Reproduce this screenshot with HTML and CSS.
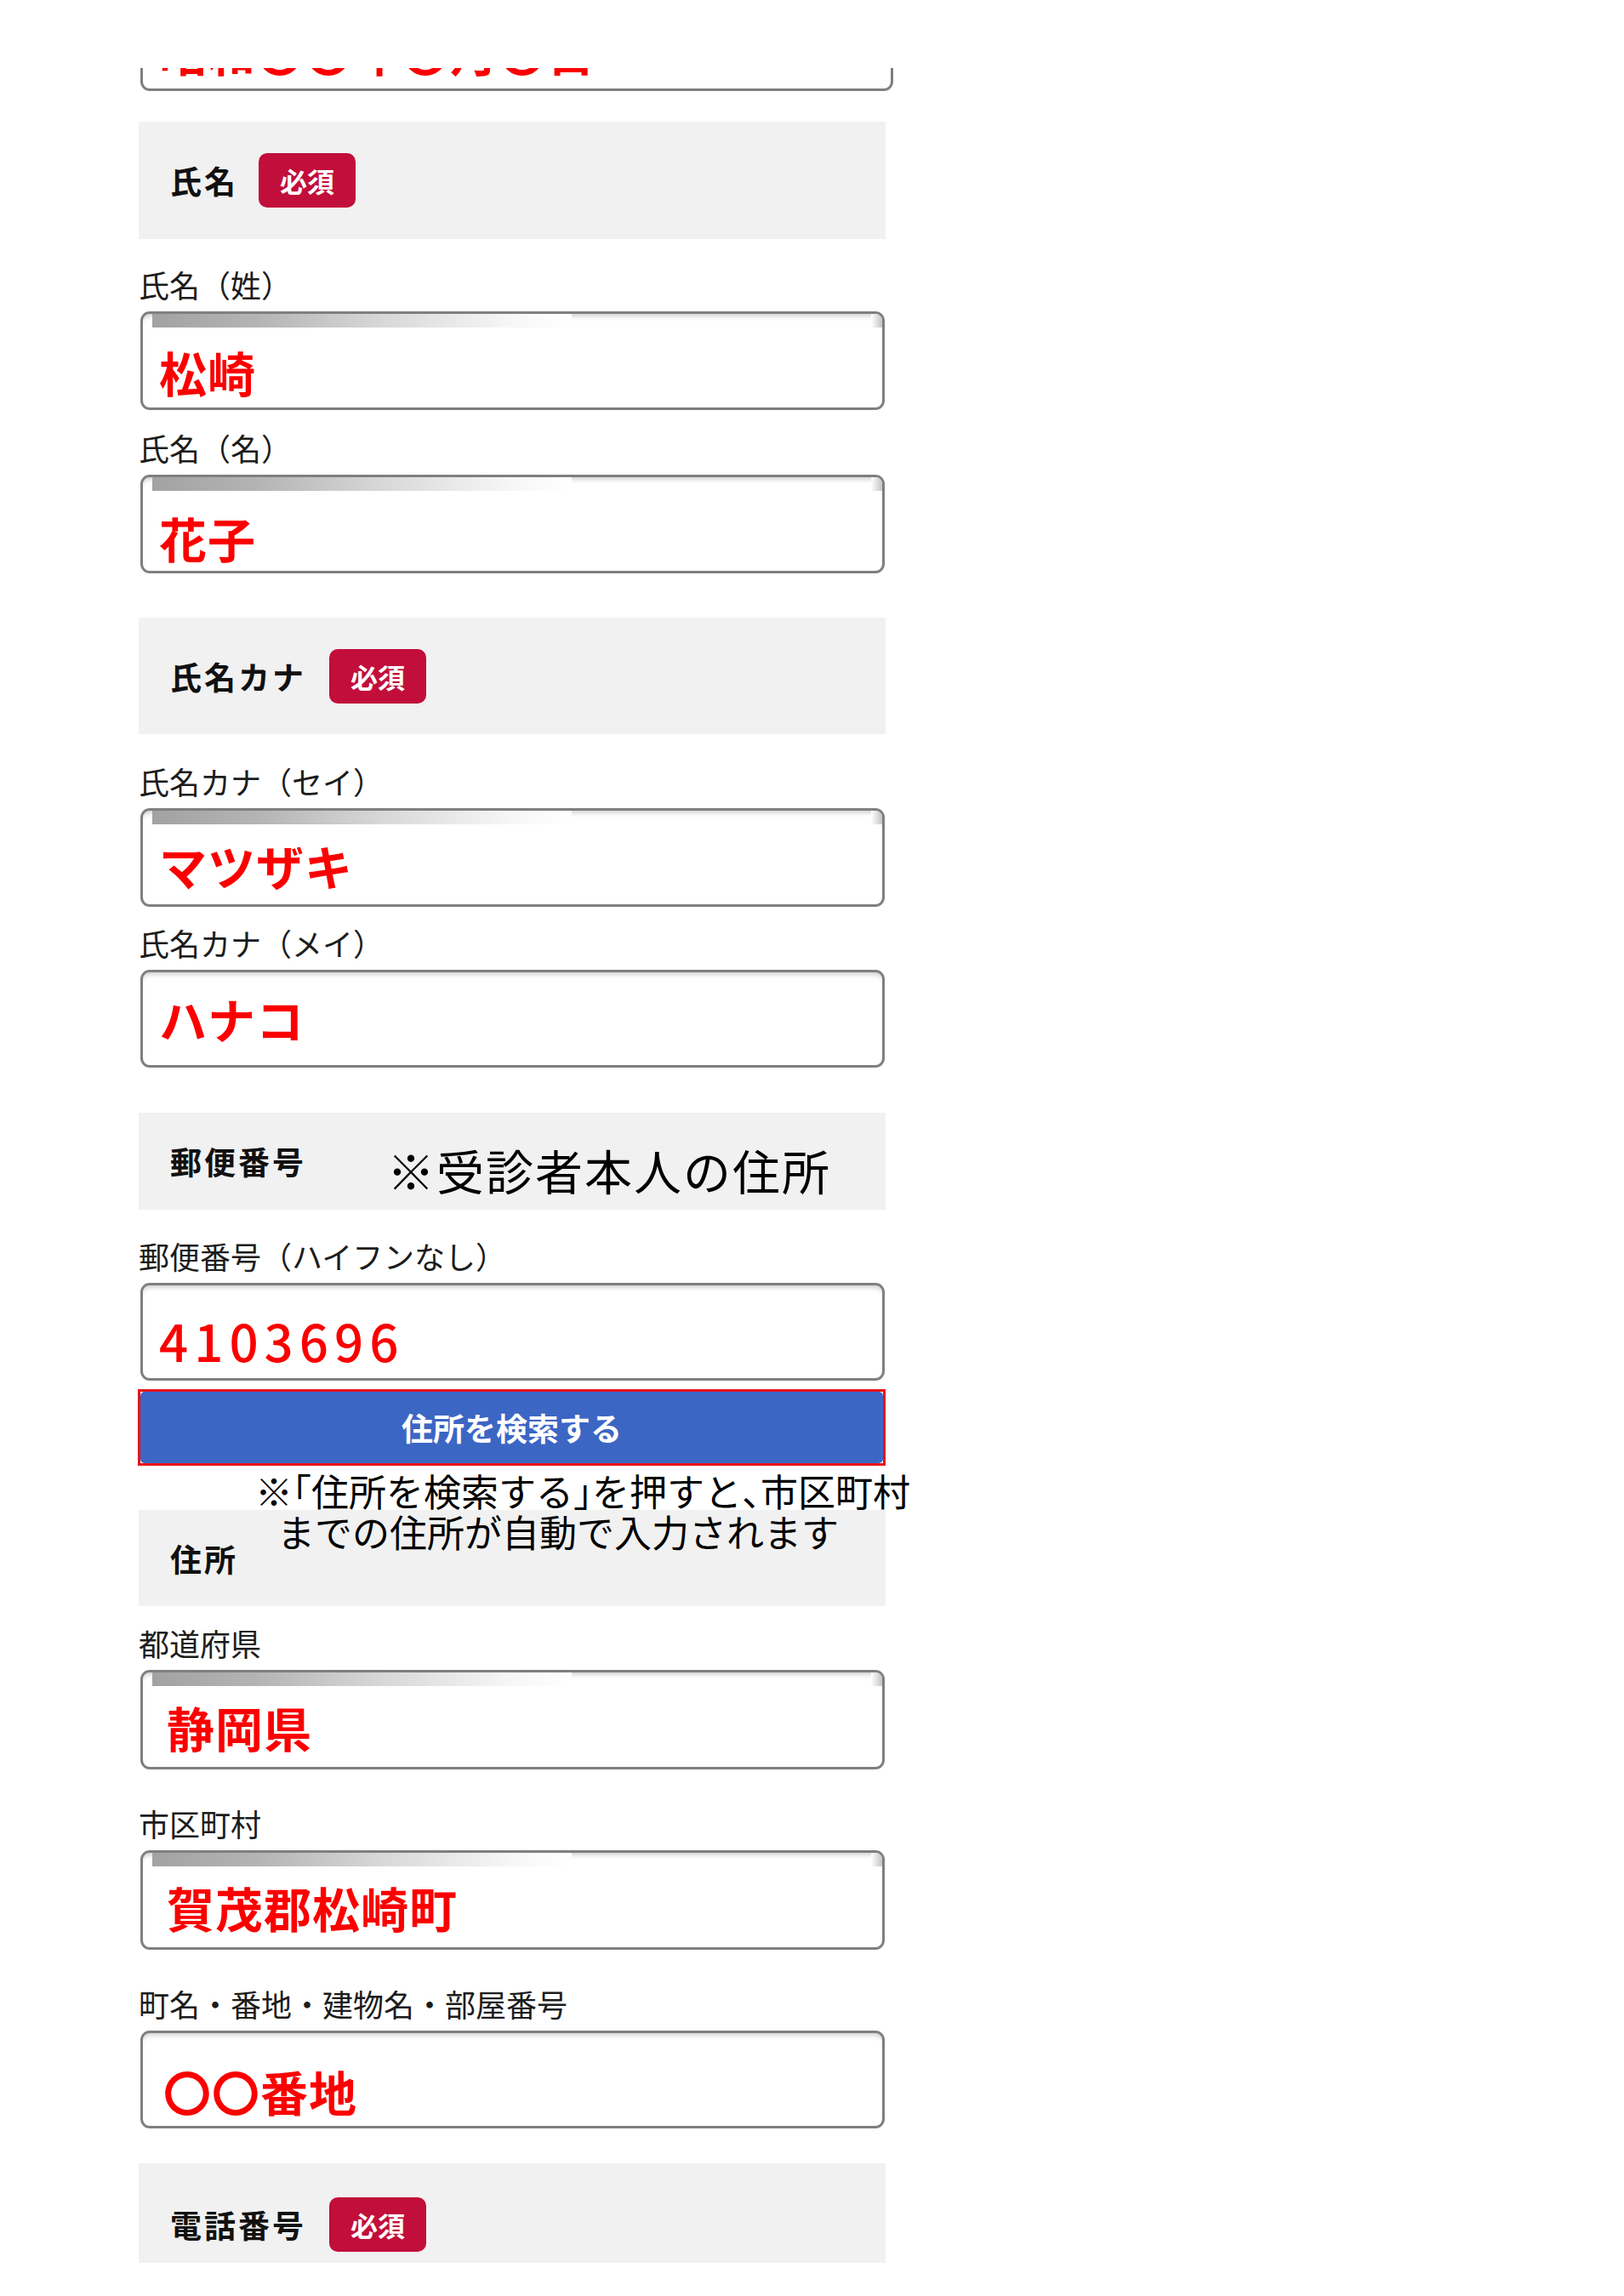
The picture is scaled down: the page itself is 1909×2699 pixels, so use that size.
FILE: index.html
```html
<!DOCTYPE html>
<html lang="ja">
<head>
<meta charset="utf-8">
<title>お申し込みフォーム</title>
<link rel="stylesheet" href="styles.css">
</head>
<body>
<main class="form">
  <div class="input clipped"><div class="val">昭和〇〇年〇月〇日</div></div>

  <section class="head head-1">
    <span class="head-label">氏名</span><span class="badge">必須</span>
  </section>
  <div class="field f-a">
    <div class="label">氏名（姓）</div>
    <div class="input">
      <div class="bar-row"><span class="bar"></span><span class="bar-end"></span></div>
      <div class="val val-mid">松崎</div>
    </div>
  </div>
  <div class="field f-b">
    <div class="label">氏名（名）</div>
    <div class="input">
      <div class="bar-row"><span class="bar"></span><span class="bar-end"></span></div>
      <div class="val val-low">花子</div>
    </div>
  </div>

  <section class="head head-2">
    <span class="head-label">氏名カナ</span><span class="badge">必須</span>
  </section>
  <div class="field f-c">
    <div class="label">氏名カナ（セイ）</div>
    <div class="input">
      <div class="bar-row"><span class="bar"></span><span class="bar-end"></span></div>
      <div class="val">マツザキ</div>
    </div>
  </div>
  <div class="field f-d">
    <div class="label">氏名カナ（メイ）</div>
    <div class="input plain">
      <div class="val val-high">ハナコ</div>
    </div>
  </div>

  <section class="head head-3">
    <span class="head-label">郵便番号</span><span class="note-a">※受診者本人の住所</span>
  </section>
  <div class="field f-e">
    <div class="label">郵便番号（ハイフンなし）</div>
    <div class="input plain">
      <div class="val digits">4103696</div>
    </div>
  </div>
  <div class="search-frame">
    <button class="search-btn" type="button">住所を検索する</button>
  </div>

  <section class="head head-4">
    <span class="head-label">住所</span>
    <div class="note-b">
      <div class="note-line">※<span class="half">「</span>住所を検索する<span class="half">」</span>を押すと<span class="half">、</span>市区町村</div>
      <div class="note-line indent">までの住所が自動で入力されます</div>
    </div>
  </section>
  <div class="field f-f">
    <div class="label">都道府県</div>
    <div class="input tall">
      <div class="bar-row"><span class="bar"></span><span class="bar-end"></span></div>
      <div class="val shift">静岡県</div>
    </div>
  </div>
  <div class="field f-g">
    <div class="label">市区町村</div>
    <div class="input tall">
      <div class="bar-row"><span class="bar"></span><span class="bar-end"></span></div>
      <div class="val shift">賀茂郡松崎町</div>
    </div>
  </div>
  <div class="field f-g">
    <div class="label">町名・番地・建物名・部屋番号</div>
    <div class="input plain short">
      <div class="val val-mid nudge">〇〇番地</div>
    </div>
  </div>

  <section class="head head-5">
    <span class="head-label">電話番号</span><span class="badge">必須</span>
  </section>
</main>
</body>
</html>
```

FILE: styles.css
```css
* {
  box-sizing: border-box;
}

html, body {
  margin: 0;
  padding: 0;
  background: #ffffff;
}

body {
  font-family: "Noto Sans CJK JP", "Noto Sans", "Liberation Sans", sans-serif;
  color: #1a1a1a;
  height: 2699px;
  overflow: hidden;
}

.form {
  width: 878px;
  margin-left: 163px;
  padding-top: 80px;
  display: flex;
  flex-direction: column;
}

/* ---------- section headers ---------- */
.head {
  position: relative;
  display: flex;
  align-items: center;
  background: #f1f1f1;
  padding-left: 37px;
}

.head-1 { margin-top: 36px; height: 138px; }
.head-2 { margin-top: 52px; height: 137px; }
.head-3 { margin-top: 53px; height: 114px; }
.head-4 { margin-top: 52px; height: 113px; }
.head-5 { margin-top: 41px; height: 117px; padding-top: 26px; }

.head-label {
  font-size: 37px;
  font-weight: 700;
  letter-spacing: 3px;
  line-height: 44px;
  color: #111111;
  white-space: nowrap;
}

.badge {
  margin-left: 24px;
  width: 114px;
  height: 64px;
  border-radius: 10px;
  background: #c20e3a;
  color: #ffffff;
  font-size: 32px;
  font-weight: 700;
  line-height: 1;
  display: flex;
  align-items: center;
  justify-content: center;
}

.head-2 .badge,
.head-5 .badge {
  margin-left: 27px;
}

.note-a {
  margin-left: 95px;
  margin-top: 19px;
  font-size: 56px;
  line-height: 60px;
  letter-spacing: 2px;
  color: #000000;
  white-space: nowrap;
}

.note-b {
  position: absolute;
  top: -47px;
  left: 137px;
  font-size: 44px;
  line-height: 48px;
  color: #000000;
  white-space: nowrap;
}

.note-line.indent {
  padding-left: 26px;
}

.half {
  font-feature-settings: "halt" 1;
}

/* ---------- fields ---------- */
.field {
  display: flex;
  flex-direction: column;
  gap: 10px;
}

.f-a { margin-top: 31px; }
.f-b { margin-top: 22px; }
.f-c { margin-top: 33px; }
.f-d { margin-top: 20px; }
.f-e { margin-top: 32px; }
.f-f { margin-top: 21px; }
.f-g { margin-top: 41px; }

.label {
  font-size: 36px;
  line-height: 44px;
  color: #1c1c1c;
  white-space: nowrap;
}

.input {
  margin-left: 2px;
  width: 875px;
  height: 116px;
  border: 3px solid #7f7f7f;
  border-radius: 11px;
  background: #ffffff;
  box-shadow: inset 0 6px 6px -4px rgba(0, 0, 0, 0.22);
  padding: 0 0 0 11px;
  overflow: hidden;
}

.input.plain {
  padding-top: 16px;
}

.input.short {
  height: 115px;
}

.input.tall {
  height: 117px;
}

.field.f-d .input,
.field.f-e .input {
  height: 115px;
}

.input.clipped {
  width: 885px;
  height: 27px;
  border-top: 0;
  border-radius: 0 0 11px 11px;
  box-shadow: none;
}

.input.clipped .val {
  margin-top: -52px;
}

.bar-row {
  display: flex;
  justify-content: space-between;
  height: 16px;
}

.bar {
  width: 493px;
  height: 16px;
  background: linear-gradient(90deg, #a2a2a2 0%, #b4b4b4 25%, #d8d8d8 55%, #f6f6f6 85%, #ffffff 100%);
}

.bar-end {
  width: 13px;
  height: 16px;
  background: linear-gradient(90deg, #ffffff 0%, #c4c4c4 100%);
}

.val {
  margin-top: 16px;
  margin-left: 8px;
  font-size: 56px;
  font-weight: 700;
  line-height: 64px;
  letter-spacing: 1px;
  color: #fb0000;
  white-space: nowrap;
}

.input.plain .val {
  margin-top: 16px;
}

.input .val-mid,
.input.plain .val-mid {
  margin-top: 20px;
}

.val-low {
  margin-top: 23px;
}

.input.plain .val-high {
  margin-top: 6px;
}

.val.shift {
  margin-left: 17px;
}

.val.nudge {
  margin-left: 13px;
}

.val.digits {
  font-size: 60px;
  font-weight: 500;
  letter-spacing: 7px;
}

/* ---------- search button ---------- */
.search-frame {
  margin-top: 10px;
  margin-left: -1px;
  width: 879px;
  height: 90px;
  border: 3px solid #e5141c;
  background: #ffffff;
}

.search-btn {
  display: flex;
  align-items: center;
  justify-content: center;
  width: 100%;
  height: 100%;
  margin: 0;
  padding: 0;
  border: 0;
  border-radius: 5px;
  background: #3c66c4;
  color: #ffffff;
  font-family: "Noto Sans CJK JP", "Noto Sans", sans-serif;
  font-size: 37px;
  font-weight: 700;
  line-height: 1;
}
```
